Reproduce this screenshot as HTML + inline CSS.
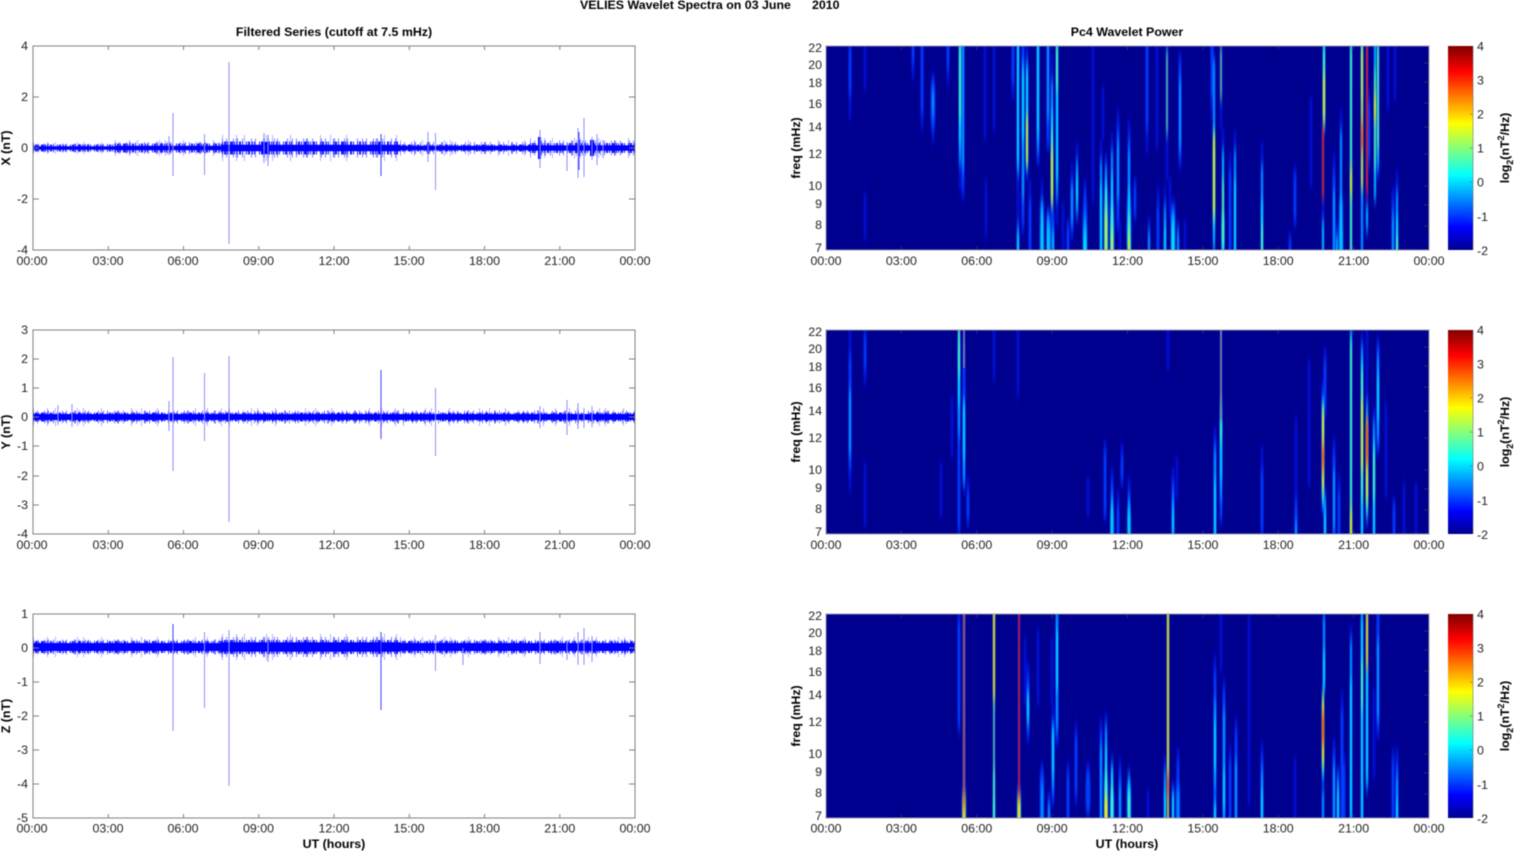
<!DOCTYPE html>
<html><head><meta charset="utf-8"><title>VELIES Wavelet Spectra</title>
<style>
html,body{margin:0;padding:0;background:#fff;width:1515px;height:851px;overflow:hidden}
svg{display:block;filter:blur(.45px)}
text{font-family:"Liberation Sans",Arial,sans-serif;font-size:12.4px;fill:#222}
.b{font-weight:bold;fill:#000}
.m{text-anchor:middle}.e{text-anchor:end}
.ax{fill:none;stroke:#808080;stroke-width:1}
.tk{fill:none;stroke:#808080;stroke-width:1}
.tkd{fill:none;stroke:#555;stroke-width:1;opacity:.5}
.core{fill:none;stroke:#0000ff}
.mid{fill:none;stroke:#1818ff;stroke-dasharray:1 1 2 1 1 2 3 1 1 1 1 2 2 1 1 3 1 1 2 2 1 1 1 4}
.lt{fill:none;stroke:#8080ff;stroke-dasharray:1 3 1 6 1 2 2 4 1 8 1 3 1 7 2 3 1 5 1 2 1 9 1 4}
.lx{fill:none;stroke:#b0b0ff;stroke-dasharray:1 13 1 7 1 21 1 5 1 17 1 29 1 9 1 15 1 37 1 11}
.sp{fill:none;stroke:#8c8cff;stroke-width:1}
.sd{fill:none;stroke:#4040ff;stroke-width:1}
.l1,.l2,.l3,.l4,.l5,.l6,.l7{fill:none;filter:url(#s)}
.l1{stroke:#000cd0;stroke-width:3}
.l2{stroke:#0040ff;stroke-width:2.4}
.l3{stroke:#0098ff;stroke-width:2}
.l4{stroke:#00e0ff;stroke-width:1.6}
.l5{stroke:#70ff90;stroke-width:1.3}
.l6{stroke:#ffe800;stroke-width:1.6}
.l7{stroke:#ff2800;stroke-width:1.6}
</style></head>
<body>
<svg width="1515" height="851" viewBox="0 0 1515 851" xmlns="http://www.w3.org/2000/svg">
<defs>
<filter id="s" filterUnits="userSpaceOnUse" x="800" y="0" width="660" height="851"><feGaussianBlur stdDeviation="0.6 6"/></filter>
<clipPath id="c1"><rect x="826" y="46" width="603" height="204"/></clipPath>
<clipPath id="c2"><rect x="826" y="330" width="603" height="204"/></clipPath>
<clipPath id="c3"><rect x="826" y="614" width="603" height="204"/></clipPath>
<linearGradient id="jet" x1="0" y1="1" x2="0" y2="0">
<stop offset="0" stop-color="#00008f"/><stop offset=".111" stop-color="#0000ff"/><stop offset=".365" stop-color="#00ffff"/><stop offset=".62" stop-color="#ffff00"/><stop offset=".875" stop-color="#ff0000"/><stop offset="1" stop-color="#800000"/>
</linearGradient>
</defs>

<!-- titles -->
<text class="b" x="580" y="9">VELIES Wavelet Spectra on 03 June<tspan x="812">2010</tspan></text>
<text class="b m" x="334" y="36">Filtered Series (cutoff at 7.5 mHz)</text>
<text class="b m" x="1127" y="36">Pc4 Wavelet Power</text>

<!-- PANEL X -->
<g>
<path class="lx" stroke-width="12" d="M33 148H115"/>
<path class="lx" stroke-width="16" d="M115 148H222M400 148H530"/>
<path class="lx" stroke-width="26" d="M222 148H400"/>
<path class="lx" stroke-width="20" d="M530 148H635"/>
<path class="lt" stroke-width="9" d="M33 148H115"/>
<path class="lt" stroke-width="12" d="M115 148H222M400 148H530"/>
<path class="lt" stroke-width="19" d="M222 148H400"/>
<path class="lt" stroke-width="15" d="M530 148H635"/>
<path class="mid" stroke-width="7" d="M33 148H115M400 148H530"/>
<path class="mid" stroke-width="9" d="M115 148H222"/>
<path class="mid" stroke-width="13" d="M222 148H400"/>
<path class="mid" stroke-width="10" d="M530 148H635"/>
<path class="core" stroke-width="3.500" d="M33 148H115"/>
<path class="core" stroke-width="4.500" d="M115 148H222M400 148H530"/>
<path class="core" stroke-width="6.500" d="M222 148H400"/>
<path class="core" stroke-width="5.500" d="M530 148H635"/>
<path class="core" stroke-width="12" d="M262 148H269M427 148H429"/>
<path class="core" stroke-width="22" d="M538 148H541"/>
<path class="core" stroke-width="16" d="M578 148H580M590 148H594"/>
<path class="sp" d="M173 113V176M204.500 134V175M229 62V244M435.500 133V190M169 136V155M264 133V163M268 135V166M428 132V162M540 130V168M567 142V171M578 128V178M584 118V177M597 134V165M592 137V160M603 140V158"/>
<path class="sd" d="M381 134V176M579 132V170"/>
</g>
<!-- PANEL Y -->
<g>
<path class="lx" stroke-width="18" d="M33 417H635"/>
<path class="lt" stroke-width="13" d="M33 417H635"/>
<path class="mid" stroke-width="9" d="M33 417H635"/>
<path class="core" stroke-width="6" d="M33 417H635"/>
<path class="sp" d="M173 357V471M204.500 373V441M229 356V522M435.500 388V456M169 401V431M58 405V425M72 404V427M540 406V428M567 400V435M578 403V429M584 408V428M592 406V427"/>
<path class="sd" d="M381 370V439"/>
</g>
<!-- PANEL Z -->
<g>
<path class="lx" stroke-width="20" d="M33 647H222M400 647H635"/>
<path class="lx" stroke-width="26" d="M222 647H400"/>
<path class="lt" stroke-width="15" d="M33 647H222M400 647H635"/>
<path class="lt" stroke-width="20" d="M222 647H400"/>
<path class="mid" stroke-width="12" d="M33 647H222M400 647H635"/>
<path class="mid" stroke-width="14" d="M222 647H400"/>
<path class="core" stroke-width="8" d="M33 647H222M400 647H635"/>
<path class="core" stroke-width="9.500" d="M222 647H400"/>
<path class="sp" d="M173 632V731M204.500 632V708M229 630V786M435.500 635V671M463 648V665M268 638V662M540 632V664M567 640V660M578 632V665M584 628V665M592 636V662"/>
<path class="sd" d="M173 624V650M381 632V710"/>
</g>

<!-- left axes -->
<path class="ax" d="M33 46H635V250H33ZM33 330H635V534H33ZM33 614H635V818H33Z"/>
<path class="tk" d="M108.300 46v4M183.500 46v4M258.800 46v4M334 46v4M409.300 46v4M484.500 46v4M559.800 46v4M108.300 250v-4M183.500 250v-4M258.800 250v-4M334 250v-4M409.300 250v-4M484.500 250v-4M559.800 250v-4
M108.300 330v4M183.500 330v4M258.800 330v4M334 330v4M409.300 330v4M484.500 330v4M559.800 330v4M108.300 534v-4M183.500 534v-4M258.800 534v-4M334 534v-4M409.300 534v-4M484.500 534v-4M559.800 534v-4
M108.300 614v4M183.500 614v4M258.800 614v4M334 614v4M409.300 614v4M484.500 614v4M559.800 614v4M108.300 818v-4M183.500 818v-4M258.800 818v-4M334 818v-4M409.300 818v-4M484.500 818v-4M559.800 818v-4
M33 97h6M33 148h6M33 199h6M635 97h-6M635 148h-6M635 199h-6
M33 359h6M33 388h6M33 417h6M33 446h6M33 476h6M33 505h6M635 359h-6M635 388h-6M635 417h-6M635 446h-6M635 476h-6M635 505h-6
M33 648h6M33 682h6M33 716h6M33 750h6M33 784h6M635 648h-6M635 682h-6M635 716h-6M635 750h-6M635 784h-6"/>

<!-- left tick labels -->
<g class="ly">
<text class="e" x="28" y="50">4</text><text class="e" x="28" y="101">2</text><text class="e" x="28" y="152">0</text><text class="e" x="28" y="203">-2</text><text class="e" x="28" y="254">-4</text>
<text class="e" x="28" y="334">3</text><text class="e" x="28" y="363">2</text><text class="e" x="28" y="392">1</text><text class="e" x="28" y="421">0</text><text class="e" x="28" y="450">-1</text><text class="e" x="28" y="480">-2</text><text class="e" x="28" y="509">-3</text><text class="e" x="28" y="538">-4</text>
<text class="e" x="28" y="618">1</text><text class="e" x="28" y="652">0</text><text class="e" x="28" y="686">-1</text><text class="e" x="28" y="720">-2</text><text class="e" x="28" y="754">-3</text><text class="e" x="28" y="788">-4</text><text class="e" x="28" y="822">-5</text>
</g>
<g>
<text class="m" x="32" y="265">00:00</text><text class="m" x="108" y="265">03:00</text><text class="m" x="183" y="265">06:00</text><text class="m" x="258.500" y="265">09:00</text><text class="m" x="334" y="265">12:00</text><text class="m" x="409" y="265">15:00</text><text class="m" x="484.500" y="265">18:00</text><text class="m" x="559.800" y="265">21:00</text><text class="m" x="635" y="265">00:00</text>
<text class="m" x="32" y="549">00:00</text><text class="m" x="108" y="549">03:00</text><text class="m" x="183" y="549">06:00</text><text class="m" x="258.500" y="549">09:00</text><text class="m" x="334" y="549">12:00</text><text class="m" x="409" y="549">15:00</text><text class="m" x="484.500" y="549">18:00</text><text class="m" x="559.800" y="549">21:00</text><text class="m" x="635" y="549">00:00</text>
<text class="m" x="32" y="832.500">00:00</text><text class="m" x="108" y="832.500">03:00</text><text class="m" x="183" y="832.500">06:00</text><text class="m" x="258.500" y="832.500">09:00</text><text class="m" x="334" y="832.500">12:00</text><text class="m" x="409" y="832.500">15:00</text><text class="m" x="484.500" y="832.500">18:00</text><text class="m" x="559.800" y="832.500">21:00</text><text class="m" x="635" y="832.500">00:00</text>
</g>
<text class="b m" transform="translate(10 148) rotate(-90)">X (nT)</text>
<text class="b m" transform="translate(10 432) rotate(-90)">Y (nT)</text>
<text class="b m" transform="translate(10 716) rotate(-90)">Z (nT)</text>
<text class="b m" x="334" y="848">UT (hours)</text>

<!-- RIGHT heatmap 1 -->
<rect x="826" y="46" width="603" height="204" fill="#00008f"/>
<g clip-path="url(#c1)">
<path class="l1" d="M850 30V120M865 30V90M865 193V240M913 30V80M922 30V130M933 73V143M948 30V85M960 30V190M963 30V200M985 30V140M994 30V130M986 180V237M1013 30V100M1018 30V270M1023 30V235M1027 30V180M1030 180V270M1038 30V165M1042 180V270M1048 30V150M1048 207V270M1052 53V227M1057 30V225M1053 220V270M1063 203V270M1068 220V270M1072 163V240M1077 143V223M1085 180V270M1093 30V203M1101 140V270M1103 87V140M1106 153V270M1112 133V270M1118 110V233M1120 220V270M1129 120V270M1135 177V220M1147 30V153M1149 217V270M1158 187V270M1157 30V150M1165 187V270M1167 30V180M1170 177V220M1173 203V270M1178 220V270M1180 53V170M1185 220V270M1212 30V120M1214 53V270M1221 30V130M1223 130V270M1230 153V270M1235 130V270M1262 143V270M1295 167V227M1290 233V270M1311 97V187M1324 30V130M1323 123V270M1334 153V270M1337 220V270M1341 110V270M1351 30V270M1362 30V270M1367 30V235M1369 87V170M1375 30V200M1378 30V180M1393 187V270M1397 170V270M1388 30V110M1395 30V100"/>
<path class="l2" style="stroke-width:4.500" d="M1085 205V270M1106 190V270M1112 200V270M1129 195V270M1173 205V270M1341 200V270M1042 205V270M1049 215V270M933 85V125"/>
<path class="l2" d="M850 46V95M913 30V65M922 30V115M933 80V130M948 30V70M963 30V190M1013 30V85M1023 30V225M1030 200V270M1038 30V160M1048 30V145M1053 210V270M1068 225V270M1072 180V230M1085 190V270M1118 125V225M1129 135V270M1135 185V215M1147 30V130M1158 205V270M1180 60V160M1212 30V100M1230 170V270M1295 175V220M1290 240V270M1334 170V270M1369 100V160M1393 200V270"/>
<path class="l3" style="stroke-width:3.500" d="M1085 225V270M1106 205V270M1112 215V270M1129 210V270M1173 215V270M1341 225V270M1042 225V270M1049 225V270"/>
<path class="l3" d="M933 90V115M963 30V170M960 30V165M1018 30V175M1018 225V270M1023 60V200M1027 60V170M1038 30V150M1042 200V270M1048 215V270M1048 30V120M1052 80V210M1057 30V200M1072 185V225M1077 160V215M1085 215V270M1101 160V270M1106 165V270M1112 150V270M1118 140V200M1129 150V270M1149 230V270M1165 205V270M1173 215V270M1180 80V150M1178 230V270M1214 60V230M1235 150V270M1262 165V270M1324 30V120M1334 190V270M1341 130V270M1362 30V270M1397 190V270M1393 215V270"/>
<path class="l4" style="stroke-width:2.800" d="M1106 215V270M1112 225V270M1129 225V270M1173 228V270M1085 238V270M1223 215V250"/>
<path class="l4" d="M960 30V145M1018 30V165M1018 235V270M1023 70V140M1027 70V165M1038 30V135M1042 210V270M1048 225V270M1052 110V200M1053 230V270M1057 30V180M1077 175V205M1085 230V270M1101 185V270M1106 180V270M1112 175V270M1129 190V270M1165 225V270M1173 220V270M1214 150V250M1223 150V270M1235 180V270M1262 200V270M1324 40V130M1323 220V260M1341 200V270M1337 235V270M1351 30V270M1362 30V100M1367 205V230M1375 30V200M1378 30V170M1397 215V270"/>
<path class="l5" d="M960 46V120M1052 130V195M1057 46V90M1106 190V270M1112 205V270M1129 215V270M1167 50V135M1214 130V220M1221 46V100M1223 180V250M1262 225V270M1324 50V125M1351 46V270M1375 70V170M1378 46V150M1397 235V270"/>
<path class="l6" d="M1027 115V165M1052 150V205M1106 212V270M1112 232V270M1129 235V270M1214 135V215M1324 75V120M1362 46V190M1375 95V120M1351 170V195"/>
<path class="l7" d="M1323 125V200M1367 40V195M1362 125V150"/>
</g>

<!-- RIGHT heatmap 2 -->
<rect x="826" y="330" width="603" height="204" fill="#00008f"/>
<g clip-path="url(#c2)">
<path class="l1" d="M850 314V490M865 314V385M865 463V527M941 463V517M952 397V457M959 314V550M964 314V490M968 477V527M994 314V380M1018 314V397M1088 477V517M1105 440V520M1112 467V550M1118 490V550M1122 443V487M1129 477V550M1168 314V370M1173 467V550M1177 457V500M1215 427V550M1221 314V520M1262 447V534M1296 417V550M1309 360V487M1323 380V513M1325 347V420M1325 487V550M1334 437V550M1339 473V550M1351 314V550M1362 333V550M1367 314V527M1374 407V550M1378 337V453M1386 403V497M1394 497V550M1404 483V550M1416 483V550"/>
<path class="l2" d="M850 355V470M865 335V370M959 320V530M964 340V480M968 490V520M1105 450V515M1112 480V550M1118 505V550M1122 455V480M1129 490V550M1173 480V550M1215 440V550M1221 400V520M1262 470V534M1296 500V550M1323 390V510M1325 360V410M1334 450V550M1339 490V550M1378 345V450M1394 505V550"/>
<path class="l3" d="M850 390V455M959 345V435M964 405V485M1112 495V550M1129 500V550M1173 495V550M1215 450V550M1221 420V500M1296 520V550M1325 495V550M1334 470V530M1362 345V550M1367 400V520M1374 420V550M1378 355V440"/>
<path class="l3" style="stroke-width:3.500" d="M1112 510V550M1129 510V550"/>
<path class="l4" d="M959 330V405M964 400V460M1112 505V550M1129 510V550M1173 510V534M1215 480V550M1221 400V480M1323 400V505M1325 510V550M1351 330V550M1362 360V540M1367 420V510M1374 440V540M1378 375V420"/>
<path class="l5" d="M959 314V375M1221 420V440M1323 405V500M1351 340V550M1362 370V500M1367 435V510M1374 450V500"/>
<path class="l6" d="M1323 410V490M1351 510V550M1362 400V470M1367 420V500"/>
<path class="l7" d="M1323 445V470M1367 420V465"/>
<path d="M1221 330V420" stroke="#808890" stroke-width="1.700" fill="none"/>
<path d="M964 330V368" stroke="#908080" stroke-width="1.500" fill="none"/>
</g>

<!-- RIGHT heatmap 3 -->
<rect x="826" y="614" width="603" height="204" fill="#00008f"/>
<g clip-path="url(#c3)">
<path class="l1" d="M959 598V715M964 598V835M994 598V835M1019 598V835M1025 638V705M1028 662V742M1038 630V705M1042 762V835M1049 792V835M1052 638V705M1053 705V805M1057 598V745M1068 762V835M1076 722V805M1088 762V815M1101 718V835M1106 712V835M1112 755V835M1120 758V835M1129 768V835M1148 790V835M1165 755V835M1168 598V835M1173 782V835M1178 748V835M1215 655V835M1221 598V672M1224 678V835M1230 745V835M1236 718V835M1249 614V805M1262 742V835M1295 758V835M1324 598V688M1323 682V835M1334 738V835M1338 765V835M1342 692V835M1344 752V835M1351 625V835M1362 598V835M1367 598V785M1374 688V778M1378 598V740M1393 748V835M1397 748V835"/>
<path class="l2" style="stroke-width:4.500" d="M1042 775V835M1088 775V810M1106 775V835M1112 790V835M1129 785V835M1178 785V835M964 790V835M1019 790V835"/>
<path class="l2" d="M959 620V730M1028 675V735M1042 770V835M1049 800V835M1053 720V800M1057 598V740M1068 772V835M1076 735V795M1088 770V810M1101 730V835M1120 770V835M1178 760V835M1215 670V835M1224 690V835M1230 760V835M1236 730V835M1262 755V835M1334 750V835M1342 710V835M1344 765V835M1378 610V730M1393 760V835M1397 760V835"/>
<path class="l3" d="M964 598V835M994 800V835M1028 690V725M1042 785V835M1049 805V825M1053 725V790M1057 610V730M1101 745V835M1106 725V835M1112 770V835M1120 785V835M1129 775V835M1165 770V835M1173 790V835M1178 790V835M1215 700V790M1215 800V835M1224 710V825M1236 760V835M1262 770V835M1323 790V835M1324 614V690M1334 765V835M1338 775V835M1351 640V835M1362 598V835M1367 660V790M1378 640V720M1397 775V835"/>
<path class="l4" style="stroke-width:3" d="M1106 780V835M1112 795V835M1129 790V835M1019 800V835M964 800V835"/>
<path class="l4" d="M994 770V835M1028 695V720M1053 730V775M1057 630V690M1106 745V835M1112 765V835M1129 785V835M1165 790V835M1173 795V835M1215 720V770M1215 805V835M1224 770V810M1262 790V835M1324 650V690M1323 700V780M1338 790V835M1351 680V820M1362 620V720M1362 720V835M1367 670V780M1397 800V835"/>
<path class="l5" d="M994 598V835M1106 770V835M1112 785V835M1129 795V830M1168 598V775M1323 690V770M1362 660V710M1367 614V660"/>
<path class="l6" style="stroke-width:2.600" d="M964 795V835M1019 795V835M1106 800V835"/>
<path class="l6" d="M994 600V700M1106 795V835M1168 600V835M1323 700V765M1367 600V670"/>
<path class="l7" style="stroke-width:1.300" d="M964 598V810M1019 598V800M1168 775V795"/>
<path class="l7" d="M1323 712V745"/>
</g>

<!-- right axes -->
<path class="ax" d="M826 46H1429V250H826ZM826 330H1429V534H826ZM826 614H1429V818H826Z" style="stroke:#9a9aa8"/>
<path class="tkd" d="M901.400 46v4M976.800 46v4M1052.100 46v4M1127.500 46v4M1202.900 46v4M1278.200 46v4M1353.600 46v4M901.400 250v-4M976.800 250v-4M1052.100 250v-4M1127.500 250v-4M1202.900 250v-4M1278.200 250v-4M1353.600 250v-4
M901.400 330v4M976.800 330v4M1052.100 330v4M1127.500 330v4M1202.900 330v4M1278.200 330v4M1353.600 330v4M901.400 534v-4M976.800 534v-4M1052.100 534v-4M1127.500 534v-4M1202.900 534v-4M1278.200 534v-4M1353.600 534v-4
M901.400 614v4M976.800 614v4M1052.100 614v4M1127.500 614v4M1202.900 614v4M1278.200 614v4M1353.600 614v4M901.400 818v-4M976.800 818v-4M1052.100 818v-4M1127.500 818v-4M1202.900 818v-4M1278.200 818v-4M1353.600 818v-4
M1429 63h-5M1429 82h-5M1429 103h-5M1429 127h-5M1429 154h-5M1429 186h-5M1429 205h-5M1429 226h-5
M1429 347h-5M1429 366h-5M1429 387h-5M1429 411h-5M1429 438h-5M1429 470h-5M1429 489h-5M1429 510h-5
M1429 631h-5M1429 650h-5M1429 671h-5M1429 695h-5M1429 722h-5M1429 754h-5M1429 773h-5M1429 794h-5"/>

<!-- freq labels -->
<g>
<text class="e" x="822" y="52">22</text><text class="e" x="822" y="69">20</text><text class="e" x="822" y="87">18</text><text class="e" x="822" y="108">16</text><text class="e" x="822" y="131">14</text><text class="e" x="822" y="158">12</text><text class="e" x="822" y="190">10</text><text class="e" x="822" y="208">9</text><text class="e" x="822" y="229">8</text><text class="e" x="822" y="252">7</text>
<text class="e" x="822" y="336">22</text><text class="e" x="822" y="353">20</text><text class="e" x="822" y="371">18</text><text class="e" x="822" y="392">16</text><text class="e" x="822" y="415">14</text><text class="e" x="822" y="442">12</text><text class="e" x="822" y="474">10</text><text class="e" x="822" y="492">9</text><text class="e" x="822" y="513">8</text><text class="e" x="822" y="536">7</text>
<text class="e" x="822" y="620">22</text><text class="e" x="822" y="637">20</text><text class="e" x="822" y="655">18</text><text class="e" x="822" y="676">16</text><text class="e" x="822" y="699">14</text><text class="e" x="822" y="726">12</text><text class="e" x="822" y="758">10</text><text class="e" x="822" y="776">9</text><text class="e" x="822" y="797">8</text><text class="e" x="822" y="820">7</text>
</g>
<g>
<text class="m" x="826" y="265">00:00</text><text class="m" x="901.400" y="265">03:00</text><text class="m" x="976.800" y="265">06:00</text><text class="m" x="1052.100" y="265">09:00</text><text class="m" x="1127.500" y="265">12:00</text><text class="m" x="1202.900" y="265">15:00</text><text class="m" x="1278.200" y="265">18:00</text><text class="m" x="1353.600" y="265">21:00</text><text class="m" x="1429" y="265">00:00</text>
<text class="m" x="826" y="549">00:00</text><text class="m" x="901.400" y="549">03:00</text><text class="m" x="976.800" y="549">06:00</text><text class="m" x="1052.100" y="549">09:00</text><text class="m" x="1127.500" y="549">12:00</text><text class="m" x="1202.900" y="549">15:00</text><text class="m" x="1278.200" y="549">18:00</text><text class="m" x="1353.600" y="549">21:00</text><text class="m" x="1429" y="549">00:00</text>
<text class="m" x="826" y="832.500">00:00</text><text class="m" x="901.400" y="832.500">03:00</text><text class="m" x="976.800" y="832.500">06:00</text><text class="m" x="1052.100" y="832.500">09:00</text><text class="m" x="1127.500" y="832.500">12:00</text><text class="m" x="1202.900" y="832.500">15:00</text><text class="m" x="1278.200" y="832.500">18:00</text><text class="m" x="1353.600" y="832.500">21:00</text><text class="m" x="1429" y="832.500">00:00</text>
</g>
<text class="b m" transform="translate(800 148) rotate(-90)">freq (mHz)</text>
<text class="b m" transform="translate(800 432) rotate(-90)">freq (mHz)</text>
<text class="b m" transform="translate(800 716) rotate(-90)">freq (mHz)</text>
<text class="b m" x="1127" y="848">UT (hours)</text>

<!-- colorbars -->
<rect x="1448" y="46" width="25" height="204" fill="url(#jet)"/>
<rect x="1448" y="330" width="25" height="204" fill="url(#jet)"/>
<rect x="1448" y="614" width="25" height="204" fill="url(#jet)"/>
<path class="tkd" d="M1473 46v204M1473 330v204M1473 614v204M1473 80h-3M1473 114h-3M1473 148h-3M1473 182h-3M1473 216h-3M1473 364h-3M1473 398h-3M1473 432h-3M1473 466h-3M1473 500h-3M1473 648h-3M1473 682h-3M1473 716h-3M1473 750h-3M1473 784h-3"/>
<g>
<text x="1477" y="50.500">4</text><text x="1477" y="84.500">3</text><text x="1477" y="118.500">2</text><text x="1477" y="152.500">1</text><text x="1477" y="186.500">0</text><text x="1477" y="221">-1</text><text x="1477" y="255">-2</text>
<text x="1477" y="334.500">4</text><text x="1477" y="368.500">3</text><text x="1477" y="402.500">2</text><text x="1477" y="436.500">1</text><text x="1477" y="470.500">0</text><text x="1477" y="505">-1</text><text x="1477" y="539">-2</text>
<text x="1477" y="618.500">4</text><text x="1477" y="652.500">3</text><text x="1477" y="686.500">2</text><text x="1477" y="720.500">1</text><text x="1477" y="754.500">0</text><text x="1477" y="789">-1</text><text x="1477" y="823">-2</text>
</g>
<text class="b m" transform="translate(1509 148) rotate(-90)">log<tspan dy="4" font-size="9">2</tspan><tspan dy="-4">(nT</tspan><tspan dy="-5" font-size="9">2</tspan><tspan dy="5">/Hz)</tspan></text>
<text class="b m" transform="translate(1509 432) rotate(-90)">log<tspan dy="4" font-size="9">2</tspan><tspan dy="-4">(nT</tspan><tspan dy="-5" font-size="9">2</tspan><tspan dy="5">/Hz)</tspan></text>
<text class="b m" transform="translate(1509 716) rotate(-90)">log<tspan dy="4" font-size="9">2</tspan><tspan dy="-4">(nT</tspan><tspan dy="-5" font-size="9">2</tspan><tspan dy="5">/Hz)</tspan></text>
</svg>
</body></html>
